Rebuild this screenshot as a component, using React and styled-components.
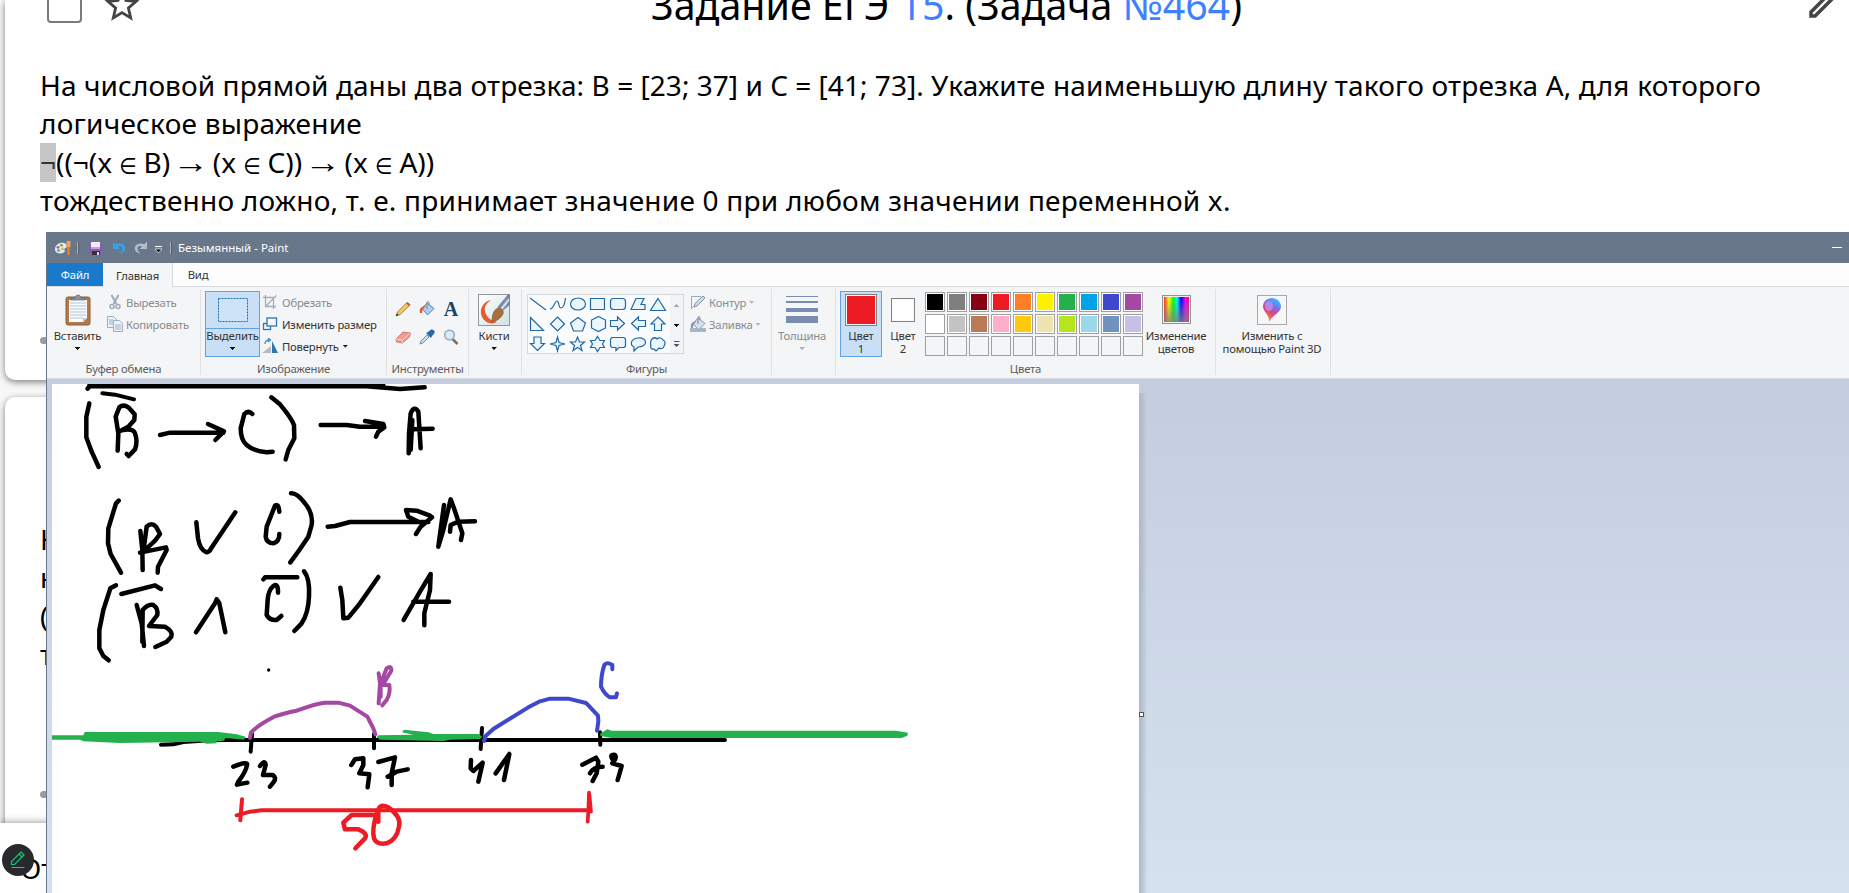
import React from "react";
import styled, { createGlobalStyle, css } from "styled-components";

const Global = createGlobalStyle`
  * { box-sizing: border-box; }
  body { margin: 0; background: #f7f7f7; overflow: hidden; }
`;

/* ---------- web page ---------- */

const Page = styled.div`
  position: relative;
  width: 1849px;
  height: 893px;
  overflow: hidden;
  background: #f8f8f8;
  display: flex;
  flex-direction: column;
  gap: 17px;
  font-family: "Noto Sans", "Open Sans", sans-serif;
  color: #000;
`;
const Card = styled.section`
  flex: none;
  margin-left: 5px;
  padding: 0 35px;
  height: ${(p) => p.$height}px;
  background: #fefefe;
  border-radius: ${(p) => (p.$first ? "0 0 0 10px" : "10px 0 0 10px")};
  box-shadow: 0 2px 7px rgba(0, 0, 0, 0.5);
`;
const CardHeader = styled.header`
  display: flex;
  align-items: center;
  height: 46px;
  margin: -18px -32px 0 7px;
`;
const Checkbox = styled.span`
  width: 35px;
  height: 35px;
  border: 2px solid #7a7a7a;
  border-radius: 4px;
  background: #fff;
`;
const HeaderIcon = styled.svg`
  width: 42px;
  height: 42px;
  flex: none;
  margin-left: ${(p) => p.$gap || 0}px;
  margin-top: ${(p) => p.$shift || 0}px;
  fill: #444;
`;
const Heading = styled.h1`
  flex: 1;
  margin: 0;
  padding-right: 54px;
  text-align: center;
  font-size: 39.35px;
  line-height: 46px;
  font-weight: 400;
  white-space: nowrap;
`;
const Link = styled.span`
  color: #3e80ff;
`;
const Problem = styled.div`
  margin-top: ${(p) => p.$top}px;
  font-size: 28px;
  line-height: 38.3px;
  white-space: nowrap;
`;
const Line = styled.div`
  height: 38.3px;
  letter-spacing: ${(p) => p.$track || 0}px;
`;
const Phrase = styled.span`
  letter-spacing: ${(p) => p.$track}px;
`;
const Marked = styled.span`
  display: inline-block;
  height: 39px;
  width: 16px;
  color: #333;
  background: #c6c6c6;
`;
const Element = styled.span`
  display: inline-block;
  width: 17px;
  line-height: 20px;
  font-family: "DejaVu Sans", sans-serif;
  font-size: 20px;
  transform: scaleY(1.12);
`;
const Implies = styled.span`
  display: inline-block;
  width: 28px;
  line-height: 20px;
  font-family: "Liberation Sans", sans-serif;
  font-size: 28px;
  transform: translateY(-1px) scale(1.3, 1.1);
`;
const Bullet = styled.span`
  display: block;
  width: 8px;
  height: 7px;
  margin-top: ${(p) => p.$top}px;
  border-radius: 4px;
  background: #9b9b9b;
`;
const AnswerBar = styled.footer`
  position: absolute;
  left: 0;
  right: 0;
  bottom: 0;
  height: 70px;
  padding: 26px 0 0 20px;
  background: #fefefe;
  box-shadow: 0 0 8px rgba(0, 0, 0, 0.45);
  font-size: 28px;
  line-height: 38px;
`;
const PenBubble = styled.span`
  position: absolute;
  left: 2px;
  top: 844px;
  width: 32px;
  height: 32px;
  border-radius: 50%;
  background: #27292d;
  display: flex;
  align-items: center;
  justify-content: center;
`;

/* ---------- paint window ---------- */

const Window = styled.div`
  position: absolute;
  left: 46px;
  top: 232px;
  right: 0;
  bottom: 0;
  display: flex;
  flex-direction: column;
  border-left: 1px solid #68778b;
  font-family: "Noto Sans", "Open Sans", sans-serif;
  font-size: 11.3px;
  letter-spacing: -0.2px;
  line-height: 13px;
  color: #333;
`;
const TitleBar = styled.div`
  flex: none;
  display: flex;
  align-items: center;
  height: 31px;
  padding: 0 7px 0 8px;
  background: #687789;
  color: #fff;
`;
const TitleIcon = styled.svg`
  width: ${(p) => p.$w || 16}px;
  height: 16px;
  margin-left: ${(p) => p.$gap || 0}px;
`;
const TitleSep = styled.i`
  width: 2px;
  height: 12px;
  margin-left: ${(p) => p.$gap}px;
  border-left: 1px solid #a9b0b8;
  border-right: 1px solid #555f6c;
`;
const TitleText = styled.span`
  flex: 1;
  margin-left: 6px;
  font-size: 11.5px;
  letter-spacing: 0;
`;
const Minimize = styled.i`
  width: 10px;
  height: 1px;
  background: #fff;
`;
const Tabs = styled.div`
  flex: none;
  display: flex;
  height: 24px;
  background: #fdfdfd;
  border-bottom: 1px solid #d8dadd;
`;
const Tab = styled.span`
  display: flex;
  align-items: center;
  justify-content: center;
  width: ${(p) => p.$w}px;
  height: 23px;
  ${(p) => p.$file && css`background: #1979ca; color: #fff;`}
  ${(p) =>
    p.$active &&
    css`
      height: 24px;
      background: #f4f5f7;
      border-right: 1px solid #d8dadd;
    `}
`;
const Ribbon = styled.div`
  flex: none;
  display: flex;
  height: 92px;
  background: #f4f5f7;
  border-bottom: 1px solid #d5d8dc;
`;
const Group = styled.div`
  position: relative;
  flex: none;
  display: flex;
  flex-direction: column;
  width: ${(p) => p.$w}px;
  height: 86px;
  margin-top: 2px;
  border-right: 1px solid #dfe1e4;
`;
const GroupBody = styled.div`
  display: flex;
  flex: none;
  height: 68px;
  padding: 2px 0 0 ${(p) => p.$pad || 0}px;
`;
const GroupName = styled.div`
  display: flex;
  flex: none;
  justify-content: center;
  align-items: center;
  height: 23px;
  color: #5c5c5c;
  white-space: nowrap;
`;
const BigButton = styled.div`
  display: flex;
  flex: none;
  flex-direction: column;
  align-items: center;
  width: ${(p) => p.$w}px;
  height: 66px;
  text-align: center;
  white-space: nowrap;
  color: ${(p) => (p.$off ? "#8b8b8b" : "#333")};
  ${(p) => p.$on && css`background: #c9dff5; box-shadow: inset 0 0 0 1px #62a2e4;`}
`;
const BigIcon = styled.div`
  display: flex;
  align-items: center;
  justify-content: center;
  width: 100%;
  height: 38px;
  border-bottom: 1px solid ${(p) => (p.$split ? "#62a2e4" : "transparent")};
`;
const Arrow = styled.i`
  width: 5px;
  height: 3px;
  flex: none;
  margin-top: ${(p) => p.$top || 0}px;
  background: ${(p) => (p.$off ? "#a9adb3" : "#111")};
  clip-path: polygon(0 0, 100% 0, 100% 33.3%, 80% 33.3%, 80% 66.6%, 60% 66.6%, 60% 100%, 40% 100%, 40% 66.6%, 20% 66.6%, 20% 33.3%, 0 33.3%);
`;
const Column = styled.div`
  display: flex;
  flex-direction: column;
`;
const SmallButton = styled.div`
  display: flex;
  align-items: center;
  height: 22px;
  padding-left: 2px;
  gap: ${(p) => p.$gap || 3}px;
  white-space: nowrap;
  color: ${(p) => (p.$off ? "#8b8b8b" : "#333")};
`;
const Icon16 = styled.svg`
  width: 16px;
  height: 16px;
  flex: none;
`;
const ToolGrid = styled.div`
  display: grid;
  grid-template-columns: repeat(3, 24px);
  grid-auto-rows: 28px;
  place-items: center;
  padding-top: 4px;
`;
const Gallery = styled.div`
  display: flex;
  width: 157px;
  height: 60px;
  margin: 3px 4px 0 0;
  border: 1px solid #d5d9de;
  background: #fafbfd;
`;
const ShapeGrid = styled.svg`
  width: 142px;
  height: 58px;
  flex: none;
`;
const GalleryScroll = styled.div`
  display: flex;
  flex-direction: column;
  align-items: center;
  width: 13px;
  gap: 17px;
  padding-top: 9px;
  background: #f2f3f6;
`;
const ScrollUp = styled(Arrow)`
  transform: scaleY(-1);
`;
const More = styled.i`
  width: 6px;
  height: 6px;
  margin-top: -3px;
  background: linear-gradient(#44546e 0 1px, transparent 1px 3px, #44546e 3px);
  clip-path: polygon(0 0, 100% 0, 100% 50%, 50% 100%, 0 50%);
`;
const Strokes = styled.div`
  display: flex;
  flex-direction: column;
  justify-content: space-between;
  width: 32px;
  height: 28px;
  & > i { background: #7b8dae; }
`;
const Swatch = styled.div`
  width: ${(p) => p.$size}px;
  height: ${(p) => p.$size}px;
  border: 1px solid #828282;
  background: ${(p) => p.$color};
  box-shadow: inset 0 0 0 1px #f8f8f8;
`;
const Palette = styled.div`
  display: grid;
  grid-template-columns: repeat(10, 20px);
  grid-auto-rows: 20px;
  gap: 2px;
  padding-top: 1px;
  margin-left: 1px;
`;
const Cell = styled.i`
  border: 1px solid #a0a0a0;
  background: ${(p) => p.$color || "#f4f5f7"};
  box-shadow: inset 0 0 0 1px ${(p) => (p.$color ? "#fff" : "#f4f5f7")};
`;
const Rainbow = styled.div`
  width: 29px;
  height: 29px;
  border: 1px solid #949494;
  box-shadow: inset 0 0 0 1px #eee;
  background: linear-gradient(transparent 10%, rgba(128, 128, 128, 0.85)),
    linear-gradient(90deg, #f33 5%, #ff0 22%, #0f0 38%, #0ff 52%, #00f 67%, #f0f 84%, #f03);
`;
const Frame3D = styled.div`
  display: flex;
  align-items: center;
  justify-content: center;
  width: 30px;
  height: 30px;
  border: 1px solid #a8a8a8;
  background: #f6f6f6;
`;
const WorkArea = styled.div`
  flex: 1;
  padding: 5px 0 0 5px;
  display: flex;
  background: linear-gradient(#c4cddf, #d5e1ef);
`;
const Canvas = styled.svg`
  flex: none;
  width: 1087px;
  height: 509px;
  background: #fefefe;
`;
const CanvasEdge = styled.div`
  position: relative;
  width: 8px;
  margin-top: 9px;
  background: linear-gradient(90deg, #a9b7c8, rgba(190, 203, 220, 0.2));
`;
const Handle = styled.i`
  position: absolute;
  left: 0;
  top: 319px;
  width: 5px;
  height: 5px;
  border: 1px solid #555;
  background: #fff;
`;

const PALETTE = [
  "#000000", "#7f7f7f", "#880015", "#ed1c24", "#ff7f27", "#fff200", "#22b14c", "#00a2e8", "#3f48cc", "#a349a4",
  "#ffffff", "#c3c3c3", "#b97a57", "#ffaec9", "#ffc90e", "#efe4b0", "#b5e61d", "#99d9ea", "#7092be", "#c8bfe7",
  ...Array(10).fill(null),
];

/* ---------- icons ---------- */

const PaintLogo = () => (
  <TitleIcon viewBox="0 0 16 16">
    <path d="M0 10C-.5 5 4.500 2 9 3c3 1 3.500 4 2 5-2 0-2 2-1 3-1 3.500-9.500 3.500-10-1z" fill="#dcecf4" />
    <circle cx="3" cy="7.300" r="1.400" fill="#e0523a" />
    <circle cx="6.500" cy="5.200" r="1.300" fill="#4ba84b" />
    <circle cx="3.500" cy="10.500" r="1.300" fill="#3b8fd8" />
    <circle cx="7.500" cy="9" r="1.400" fill="#f0b52c" />
    <path d="M13.500 1v6" stroke="#f6a053" strokeWidth="4" />
    <path d="M13.500 7v8" stroke="#e8842d" strokeWidth="2.200" />
  </TitleIcon>
);
const SaveIcon = () => (
  <TitleIcon viewBox="0 0 16 16" $gap={9}>
    <path d="M1 2h13v13H3l-2-2z" fill="#8a5bb8" />
    <path d="M3 2h9v7H3z" fill="#f2ecf7" />
    <path d="M3 7h9v2H3z" fill="#bda6d6" />
    <path d="M4 11h8v4H4z" fill="#333" />
    <path d="M9 12h2v3H9z" fill="#ddd" />
  </TitleIcon>
);
const UndoIcon = () => (
  <TitleIcon viewBox="0 0 16 16" $w={15} $gap={8}>
    <path d="M1 1v8h8L6.400 6.500C10 5 12 7 11 10c-.5 1.500-2 3-3.500 4C12 13.500 14.500 11 14 7.500 13.500 3.500 8 2 4 4z" fill="#36a3ee" />
  </TitleIcon>
);
const RedoIcon = () => (
  <TitleIcon viewBox="0 0 16 16" $w={15} $gap={6}>
    <path d="M15 1v8H7l2.600-2.500C6 5 4 7 5 10c.5 1.500 2 3 3.500 4C4 13.500 1.500 11 2 7.500 2.500 3.500 8 2 12 4z" fill="#b2bdca" />
  </TitleIcon>
);
const QuickMenu = () => (
  <TitleIcon viewBox="0 0 8 16" $w={8} $gap={7}>
    <path d="M0 6.500h7" stroke="#fff" />
    <path d="M0 9h7l-3.500 4z" fill="#111" stroke="#fff" strokeWidth=".7" />
  </TitleIcon>
);
const PasteIcon = () => (
  <svg width="28" height="32" viewBox="0 0 28 32">
    <rect x="2" y="3" width="24" height="28" rx="2" fill="#b17a4b" stroke="#8c5c34" />
    <path d="M5 6h18v18l-4 4H5z" fill="#f8fafc" />
    <path d="M6 9h16M6 12h16M6 15h16M6 18h16M6 21h16M6 24h13" stroke="#b3c5da" />
    <path d="M19 28v-4h4z" fill="#c2cbd6" />
    <path d="M7 6V4h4c0-4 6-4 6 0h4v2z" fill="#8e949b" stroke="#666" strokeWidth=".7" />
  </svg>
);
const CutIcon = () => (
  <Icon16 viewBox="0 0 16 16" fill="none" stroke="#a0abb9" strokeWidth="1.5">
    <path d="M4.500 1l5 9M11.500 1l-5 9" strokeWidth="2" />
    <circle cx="5" cy="12.500" r="2" />
    <circle cx="11" cy="12.500" r="2" />
  </Icon16>
);
const CopyIcon = () => (
  <Icon16 viewBox="0 0 16 16" fill="#edf2f8" stroke="#9caec6">
    <path d="M.5.500h6l3 3v8h-9z" />
    <path d="M2 4h4M2 6h5M2 8h5" />
    <path d="M6.500 4.500h6l3 3v8h-9z" />
    <path d="M8 9h6M8 11h6M8 13h6" />
  </Icon16>
);
const SelectIcon = () => (
  <svg width="32" height="26" viewBox="0 0 32 26">
    <rect x="1.500" y="1.500" width="29" height="23" fill="#cfe3f8" stroke="#1e6cb0" strokeDasharray="2 1" />
  </svg>
);
const CropIcon = () => (
  <Icon16 viewBox="0 0 16 16" fill="none" stroke="#a3adbd" strokeWidth="1.300">
    <path d="M3.500 1v11.500H14M1 3.500h10.500V15M3.500 12.500l11-11" />
  </Icon16>
);
const ResizeIcon = () => (
  <Icon16 viewBox="0 0 16 16" fill="#f4f9fe" stroke="#2d74b4" strokeWidth="1.300">
    <rect x="1.500" y="7.500" width="7" height="6" />
    <rect x="5" y="2" width="9.500" height="8" />
  </Icon16>
);
const RotateIcon = () => (
  <Icon16 viewBox="0 0 16 16">
    <path d="M0 15L9 8v7z" fill="#b8bcc2" />
    <path d="M10 3l6 12h-6z" fill="#2f78ae" />
    <path d="M3 6c0-3 2-4 4-4M6 0l2.500 2L6 4" fill="none" stroke="#3a83c4" strokeWidth="1.300" />
  </Icon16>
);
const PencilIcon = () => (
  <Icon16 viewBox="0 0 16 16">
    <path d="M1 15l1.500-4L12 1.500 15 4 5 13.500z" fill="#f0cc62" stroke="#8a6a2a" strokeWidth=".8" />
    <path d="M11 2.500L12.500 1 15.500 3.500 14 5z" fill="#d9534a" />
    <path d="M1 15l1-2.500 1.500 1.500z" fill="#222" />
  </Icon16>
);
const BucketIcon = ({ off }) => (
  <Icon16 viewBox="0 0 16 16">
    {off && <path d="M0 12h16v4H0z" fill="#a9b6c9" />}
    <path d="M8 2l7 5.500L8.500 14 3 7.500z" fill={off ? "#d5dee9" : "#a9cdee"} stroke={off ? "#8b9bb2" : "#5787b5"} />
    <path d="M8 8V1.500C8 0 10 0 10 2v2" fill="none" stroke="#77889c" />
    <path d="M1 12C0 7 3 5 7 5 4 7 3 9 3 12z" fill={off ? "#8797ae" : "#e2552c"} />
  </Icon16>
);
const TextIcon = () => (
  <Icon16 viewBox="0 0 16 16">
    <text x="8" y="14.500" textAnchor="middle" fontFamily="Liberation Serif, serif" fontWeight="700" fontSize="20" letterSpacing="0" fill="#213f66">A</text>
  </Icon16>
);
const EraserIcon = () => (
  <Icon16 viewBox="0 0 16 16">
    <path d="M1 10l7-7 7.500 1-1 4-7 6-6-1z" fill="#f09a94" stroke="#c76a66" strokeWidth=".8" />
    <path d="M1 10l6.500 1 7.500-7M7.500 11v3" fill="none" stroke="#fbd0cc" />
  </Icon16>
);
const DropperIcon = () => (
  <Icon16 viewBox="0 0 16 16">
    <path d="M1 15l1-3 6-6 2 2-6 6z" fill="#c4def2" stroke="#5c7890" strokeWidth=".8" />
    <path d="M7 4l5 5 1-2 2.500-3c1-2-2-4.500-4-3L9 3z" fill="#2668a8" />
  </Icon16>
);
const LensIcon = () => (
  <Icon16 viewBox="0 0 16 16">
    <path d="M9.500 10l5 5" stroke="#8a6a52" strokeWidth="2.500" />
    <circle cx="6.500" cy="6" r="4.800" fill="#d8ebf9" stroke="#98a8b8" strokeWidth="1.500" />
  </Icon16>
);
const BrushIcon = () => (
  <svg width="32" height="32" viewBox="0 0 32 32">
    <defs>
      <linearGradient id="brushBack" x2="1" y2="1">
        <stop offset="0" stopColor="#ffffff" />
        <stop offset="1" stopColor="#cfe2e2" />
      </linearGradient>
    </defs>
    <rect x=".5" y=".5" width="31" height="31" fill="url(#brushBack)" stroke="#969696" />
    <path d="M13 6C4 8 1 16 4 23c3 6 10 8 15 5-6-1-11-5-12-11-1-5 2-8 6-11z" fill="#e85a2b" />
    <path d="M20 13L30 1h1v10l-7 6z" fill="#7c8fae" stroke="#53617a" strokeWidth=".6" />
    <path d="M22 15L31 4v3l-7 9z" fill="#dbe3ef" />
    <path d="M14 28c0-6 1-12 6-14 4 0 6 3 5 6-2 4-6 7-11 8z" fill="#a4713c" stroke="#7a5127" strokeWidth=".6" />
  </svg>
);
const OutlineIcon = () => (
  <Icon16 viewBox="0 0 16 16">
    <path d="M11 2.500H1.500v12L5 11" fill="none" stroke="#9aa8bb" />
    <path d="M4 13l1-3.500L13 2l2 2-8 8z" fill="#d2dae5" stroke="#8595ac" />
  </Icon16>
);
const Paint3DIcon = () => (
  <svg width="18" height="24" viewBox="0 0 18 24">
    <defs>
      <linearGradient id="drop" x1=".8" y1="0" x2=".3" y2="1">
        <stop offset="0" stopColor="#23d3f2" />
        <stop offset=".35" stopColor="#7c6cf0" />
        <stop offset=".65" stopColor="#e0457f" />
        <stop offset="1" stopColor="#f5a02c" />
      </linearGradient>
    </defs>
    <path d="M9 0c5 0 9 4 9 8.500C18 15 9 17 6 24 7 17 0 14 0 8.500 0 4 4 0 9 0z" fill="url(#drop)" />
    <ellipse cx="6" cy="8" rx="4" ry="5" fill="#c9a0f5" opacity=".6" />
  </svg>
);
const Shapes = () => (
  <ShapeGrid viewBox="528 295 142 58" fill="#eaf5fc" stroke="#2168a6" strokeWidth="1.200">
    <path d="M530 298l16 12" />
    <path d="M550 309C554 309 554.500 301 557 301S558 308 561 308 565 302 565.500 298" fill="none" />
    <ellipse cx="578" cy="304" rx="7.500" ry="6" />
    <path d="M590.500 298.500h14v11h-14z" />
    <rect x="610.500" y="298.500" width="15" height="11" rx="3" />
    <path d="M631 309.500l5-11h8l-3 6h4v5z" />
    <path d="M658 298.500l7.500 12h-15z" />
    <path d="M530.500 317.500v13h13z" />
    <path d="M557.500 317l7 7-7 7-7-7z" />
    <path d="M578 317.500l7.500 5.500-3 8h-9l-3-8z" />
    <path d="M598.500 316.500l7 3.500v8l-7 3.500-7-3.500v-8z" />
    <path d="M610.500 320.500h7v-3.500l7 6.500-7 6.500v-3.500h-7z" />
    <path d="M645.500 320.500h-7v-3.500l-7 6.500 7 6.500v-3.500h7z" />
    <path d="M658 317l7 7h-3.500v6.500h-7V324H651z" />
    <path d="M537.500 350.500l7-7H541v-6.500h-7v6.500h-3.500z" />
    <path d="M557.500 337l1.500 5.500 6 1.500-6 1.500-1.500 5.500-1.500-5.500-6-1.500 6-1.500z" />
    <path d="M577.500 337l2 5h5l-4 3.500 1.500 5-4.500-3-4.500 3 1.500-5-4-3.500h5z" />
    <path d="M597.500 336.500l2.500 4h4.500l-2 3.500 2 3.500H600l-2.500 4-2.500-4h-4.500l2-3.500-2-3.500h4.500z" />
    <path d="M612 337.500h12l1.500 1.500v7l-1.500 1.500h-5l-3 3v-3h-4l-1.500-1.500v-7z" />
    <path d="M634 351v-4c-4-2-4-8 4-9 10-1 10 9 0 9z" />
    <path d="M652 339c2-2 4-1 5 0 2-2 5-1 6 1 3 1 2 5 1 6 0 3-4 3-5 2l-3 3-2-2c-3 1-4-2-3-4-1-2 0-5 1-6z" />
  </ShapeGrid>
);

/* ---------- drawing ---------- */

const Ink = ({ d, color = "#000", w = 13.5 }) => (
  <path d={d} fill="none" stroke={color} strokeWidth={w} strokeLinecap="round" strokeLinejoin="round" />
);

const Drawing = () => (
  <Canvas viewBox="52 384 1087 509">
    <g transform="translate(0 370) scale(.33333)">
      <Ink d="M263 56L268 49H1100L1200 57L1274 52M268 47H1150" />
      <Ink d="M307 70L345 74L402 88" w={12} />
      <Ink d="M268 100L259 140V202L275 245L296 291" />
      <Ink d="M353 242L355 190L347 140L358 112Q370 102 385 112L404 133L403 150L385 170L355 186M370 180Q400 175 405 190Q414 215 405 238L386 258L380 252" />
      <Ink d="M480 195L510 188H670M624 162L672 184L646 210" />
      <Ink d="M757 132Q745 120 733 132L722 175Q722 210 740 225Q760 243 800 247L818 245" />
      <Ink d="M814 82L840 103Q875 145 882 165L883 205L865 240L857 268" />
      <Ink d="M962 165H1040L1080 170H1150M1095 153L1150 162L1153 172L1135 185L1128 200" />
      <Ink d="M1226 250L1227 190L1232 130Q1243 105 1255 125L1262 235M1232 240L1237 150M1240 178L1298 176" />

      <Ink d="M356 392L348 400L325 475L324 520L332 552L363 608" />
      <Ink d="M421 483L427 540L428 600M432 530L440 470Q455 455 468 470L480 492L465 512L430 545L420 548L498 532L500 540L474 590L473 608" />
      <Ink d="M589 457L594 505Q600 540 620 547Q630 545 632 537L706 427" />
      <Ink d="M838 425Q835 398 825 407L800 470L797 500Q800 520 820 520Q838 515 838 492" />
      <Ink d="M873 370Q890 368 915 400Q940 430 935 465L925 500L898 540L871 577" />
      <Ink d="M983 470L1005 468L1050 456H1285M1248 492L1262 470L1296 442L1290 437L1250 422L1218 420L1225 440L1255 455" />
      <Ink d="M1332 405L1315 530L1330 480L1352 388L1362 415L1387 490L1383 510M1350 485L1352 465L1375 455L1425 454" />

      <Ink d="M348 646L331 655L310 720L298 780V835L310 858L326 871" />
      <Ink d="M364 672L465 646L483 657" />
      <Ink d="M410 705L425 760L432 828M427 815L428 720Q445 700 460 705Q475 715 472 735L447 768L495 770Q520 785 514 800L500 815L466 831" />
      <Ink d="M588 787L645 700L650 688L658 700L676 787" />
      <Ink d="M790 628L795 622H892M834 668Q835 638 820 648Q805 660 803 690L800 735Q810 752 830 750L844 738" />
      <Ink d="M912 604Q930 625 927 680Q925 730 905 760L883 783" />
      <Ink d="M1021 653L1027 690L1030 745L1045 743L1080 700L1135 621" />
      <Ink d="M1211 750L1260 665L1292 612L1290 660L1273 730V766M1240 695H1347" />
    </g>
    <g transform="translate(0 640) scale(.33333)">
      <circle cx="806" cy="90" r="5" />
      <Ink d="M483 314L520 313L550 306L640 300H2175" w={12} />
      <Ink d="M756 282L752 335M1122 282V325M1446 264L1442 327M1800 277L1801 314" w={12} />
      <path
        fill="#22b14c"
        d="M150 286H250L254 276H655L710 283L737 290L732 299L676 294L672 302L650 304V310L620 311L600 305L360 309L250 304L240 299H150Z"
      />
      <path
        fill="#22b14c"
        d="M1130 292L1135 286L1240 284L1206 277L1212 269L1285 277L1300 282H1435L1447 290L1440 297L1350 299L1330 303L1140 299Z"
      />
      <path fill="#22b14c" d="M1800 281L1822 268L1835 272H2688L2724 278L2722 287L2705 294H1835L1802 288Z" />
      <Ink d="M750 293L753 278Q770 258 825 229Q850 220 890 212Q950 190 975 188H1015L1050 197L1102 230L1120 265L1126 283" color="#a349a4" w={12} />
      <Ink d="M1136 100L1140 130L1136 190M1142 170V130L1160 85Q1175 75 1174 92L1148 135L1168 135Q1172 160 1160 180L1147 196" color="#a349a4" w={12} />
      <Ink d="M700 380Q745 362 741 375Q738 395 715 425L711 434L742 428M780 378Q795 357 797 375L789 405L818 405Q830 412 822 425L810 440" />
      <Ink d="M1054 375L1065 358L1090 355V375L1078 400L1108 403L1103 442M1135 366L1185 352L1175 400V435M1163 410L1190 395L1223 388" />
      <Ink d="M1413 360L1412 385L1420 393L1448 368L1435 425M1487 400L1528 342L1512 420" />
      <Ink d="M710 526L750 515L785 511H1765M726 478L721 541" color="#ed1c24" w={12} />
      <Ink d="M1118 525H1055L1030 548L1035 568H1075Q1105 580 1095 595L1066 625M1135 545V510Q1140 490 1165 502Q1205 530 1197 560Q1190 600 1160 610Q1130 615 1122 595Q1115 570 1130 520" color="#ed1c24" />
    </g>
    <g transform="translate(440 640) scale(.33333)">
      <Ink d="M132 303L137 288L160 267L265 202L300 184L330 176H385L438 189L474 227L475 245L471 272" color="#3f48cc" w={12} />
      <Ink d="M517 88V75Q500 65 493 75Q483 105 483 140Q495 165 510 172H528L531 160" color="#3f48cc" w={12} />
      <Ink d="M427 374L468 353L475 365L470 400L458 423M450 400Q460 380 488 380M517 357Q508 342 525 345Q532 355 517 370L545 378L533 420" />
      <Ink d="M447 458L445 515L443 545M448 462L453 515" color="#ed1c24" w={11} />
    </g>
  </Canvas>
);

/* ---------- app ---------- */

export default function App() {
  return (
    <Page>
      <Global />
      <Card $first $height={380}>
        <CardHeader>
          <Checkbox />
          <HeaderIcon $gap={19} viewBox="0 0 24 24">
            <path d="M22 9.240l-7.190-.62L12 2 9.190 8.630 2 9.240l5.460 4.730L5.820 21 12 17.270 18.180 21l-1.630-7.030zM12 15.400l-3.760 2.270 1-4.280-3.320-2.880 4.380-.38L12 6.100l1.710 4.040 4.380.38-3.320 2.880 1 4.280z" />
          </HeaderIcon>
          <Heading>
            Задание ЕГЭ <Link>15</Link>. (Задача <Link>№464</Link>)
          </Heading>
          <HeaderIcon $shift={-6} viewBox="0 0 24 24">
            <path d="M14.060 9.020l.92.92L5.920 19H5v-.92l9.060-9.060M17.660 3c-.25 0-.51.1-.7.29l-1.830 1.830 3.750 3.750 1.830-1.830c.39-.39.39-1.020 0-1.410l-2.340-2.340c-.2-.2-.45-.29-.71-.29zm-3.600 3.190L3 17.250V21h3.750L17.810 9.940l-3.750-3.750z" />
          </HeaderIcon>
        </CardHeader>
        <Problem $top={38}>
          <Line>
            <Phrase $track={0.09}>На числовой прямой даны два отрезка: </Phrase>
            <Phrase $track={0.04}>B = [23; 37] и C = [41; 73]. </Phrase>
            <Phrase $track={0.185}>Укажите наименьшую длину такого отрезка A, для которого</Phrase>
          </Line>
          <Line $track={0.235}>логическое выражение</Line>
          <Line>
            <Marked>¬</Marked>((¬(x <Element>∈</Element> B) <Implies>→</Implies> (x <Element>∈</Element> C)) <Implies>→</Implies> (x <Element>∈</Element> A))
          </Line>
          <Line $track={0.23}>тождественно ложно, т. е. принимает значение 0 при любом значении переменной x.</Line>
        </Problem>
        <Bullet $top={118} />
      </Card>
      <Card $height={560}>
        <Problem $top={123}>
          <Line>Н</Line>
          <Line>к</Line>
          <Line>(</Line>
          <Line>т</Line>
        </Problem>
        <Bullet $top={118} />
      </Card>
      <AnswerBar>От</AnswerBar>
      <PenBubble>
        <svg width="16" height="18" viewBox="0 0 16 18" fill="none" stroke="#19c774" strokeWidth="1.200">
          <path d="M1.500 13.500v-3L11 1l3 3-9.500 9.500zM9 3l3 3M1.500 16.500h13" />
        </svg>
      </PenBubble>

      <Window>
        <TitleBar>
          <PaintLogo />
          <TitleSep $gap={6} />
          <SaveIcon />
          <UndoIcon />
          <RedoIcon />
          <QuickMenu />
          <TitleSep $gap={7} />
          <TitleText>Безымянный - Paint</TitleText>
          <Minimize />
        </TitleBar>
        <Tabs>
          <Tab $w={56} $file>Файл</Tab>
          <Tab $w={70} $active>Главная</Tab>
          <Tab $w={50}>Вид</Tab>
        </Tabs>
        <Ribbon>
          <Group $w={154}>
            <GroupBody $pad={3}>
              <BigButton $w={55}>
                <BigIcon><PasteIcon /></BigIcon>
                Вставить
                <Arrow $top={5} />
              </BigButton>
              <Column>
                <SmallButton $off><CutIcon />Вырезать</SmallButton>
                <SmallButton $off><CopyIcon />Копировать</SmallButton>
              </Column>
            </GroupBody>
            <GroupName>Буфер обмена</GroupName>
          </Group>
          <Group $w={186}>
            <GroupBody $pad={4}>
              <BigButton $w={55} $on>
                <BigIcon $split><SelectIcon /></BigIcon>
                Выделить
                <Arrow $top={5} />
              </BigButton>
              <Column>
                <SmallButton $off $gap={4}><CropIcon />Обрезать</SmallButton>
                <SmallButton $gap={4}><ResizeIcon />Изменить размер</SmallButton>
                <SmallButton $gap={4}><RotateIcon />Повернуть<Arrow /></SmallButton>
              </Column>
            </GroupBody>
            <GroupName>Изображение</GroupName>
          </Group>
          <Group $w={82}>
            <GroupBody $pad={4}>
              <ToolGrid>
                <PencilIcon />
                <BucketIcon />
                <TextIcon />
                <EraserIcon />
                <DropperIcon />
                <LensIcon />
              </ToolGrid>
            </GroupBody>
            <GroupName>Инструменты</GroupName>
          </Group>
          <Group $w={53}>
            <GroupBody>
              <BigButton $w={50}>
                <BigIcon><BrushIcon /></BigIcon>
                Кисти
                <Arrow $top={5} />
              </BigButton>
            </GroupBody>
          </Group>
          <Group $w={250}>
            <GroupBody $pad={5}>
              <Gallery>
                <Shapes />
                <GalleryScroll>
                  <ScrollUp $off />
                  <Arrow />
                  <More />
                </GalleryScroll>
              </Gallery>
              <Column>
                <SmallButton $off><OutlineIcon />Контур<Arrow $off /></SmallButton>
                <SmallButton $off><BucketIcon off />Заливка<Arrow $off /></SmallButton>
              </Column>
            </GroupBody>
            <GroupName>Фигуры</GroupName>
          </Group>
          <Group $w={64}>
            <GroupBody>
              <BigButton $w={60} $off>
                <BigIcon>
                  <Strokes>
                    <i style={{ height: 1 }} />
                    <i style={{ height: 2 }} />
                    <i style={{ height: 4 }} />
                    <i style={{ height: 7 }} />
                  </Strokes>
                </BigIcon>
                Толщина
                <Arrow $off $top={5} />
              </BigButton>
            </GroupBody>
          </Group>
          <Group $w={380}>
            <GroupBody $pad={4}>
              <BigButton $w={42} $on>
                <BigIcon><Swatch $size={32} $color="#ed1c24" /></BigIcon>
                Цвет<br />1
              </BigButton>
              <BigButton $w={42}>
                <BigIcon><Swatch $size={24} $color="#fff" /></BigIcon>
                Цвет<br />2
              </BigButton>
              <Palette>
                {PALETTE.map((c, i) => (
                  <Cell key={i} $color={c} />
                ))}
              </Palette>
              <BigButton $w={66}>
                <BigIcon><Rainbow /></BigIcon>
                Изменение<br />цветов
              </BigButton>
            </GroupBody>
            <GroupName>Цвета</GroupName>
          </Group>
          <Group $w={115}>
            <GroupBody>
              <BigButton $w={112}>
                <BigIcon><Frame3D><Paint3DIcon /></Frame3D></BigIcon>
                Изменить с<br />помощью Paint 3D
              </BigButton>
            </GroupBody>
          </Group>
        </Ribbon>
        <WorkArea>
          <Drawing />
          <CanvasEdge>
            <Handle />
          </CanvasEdge>
        </WorkArea>
      </Window>
    </Page>
  );
}
